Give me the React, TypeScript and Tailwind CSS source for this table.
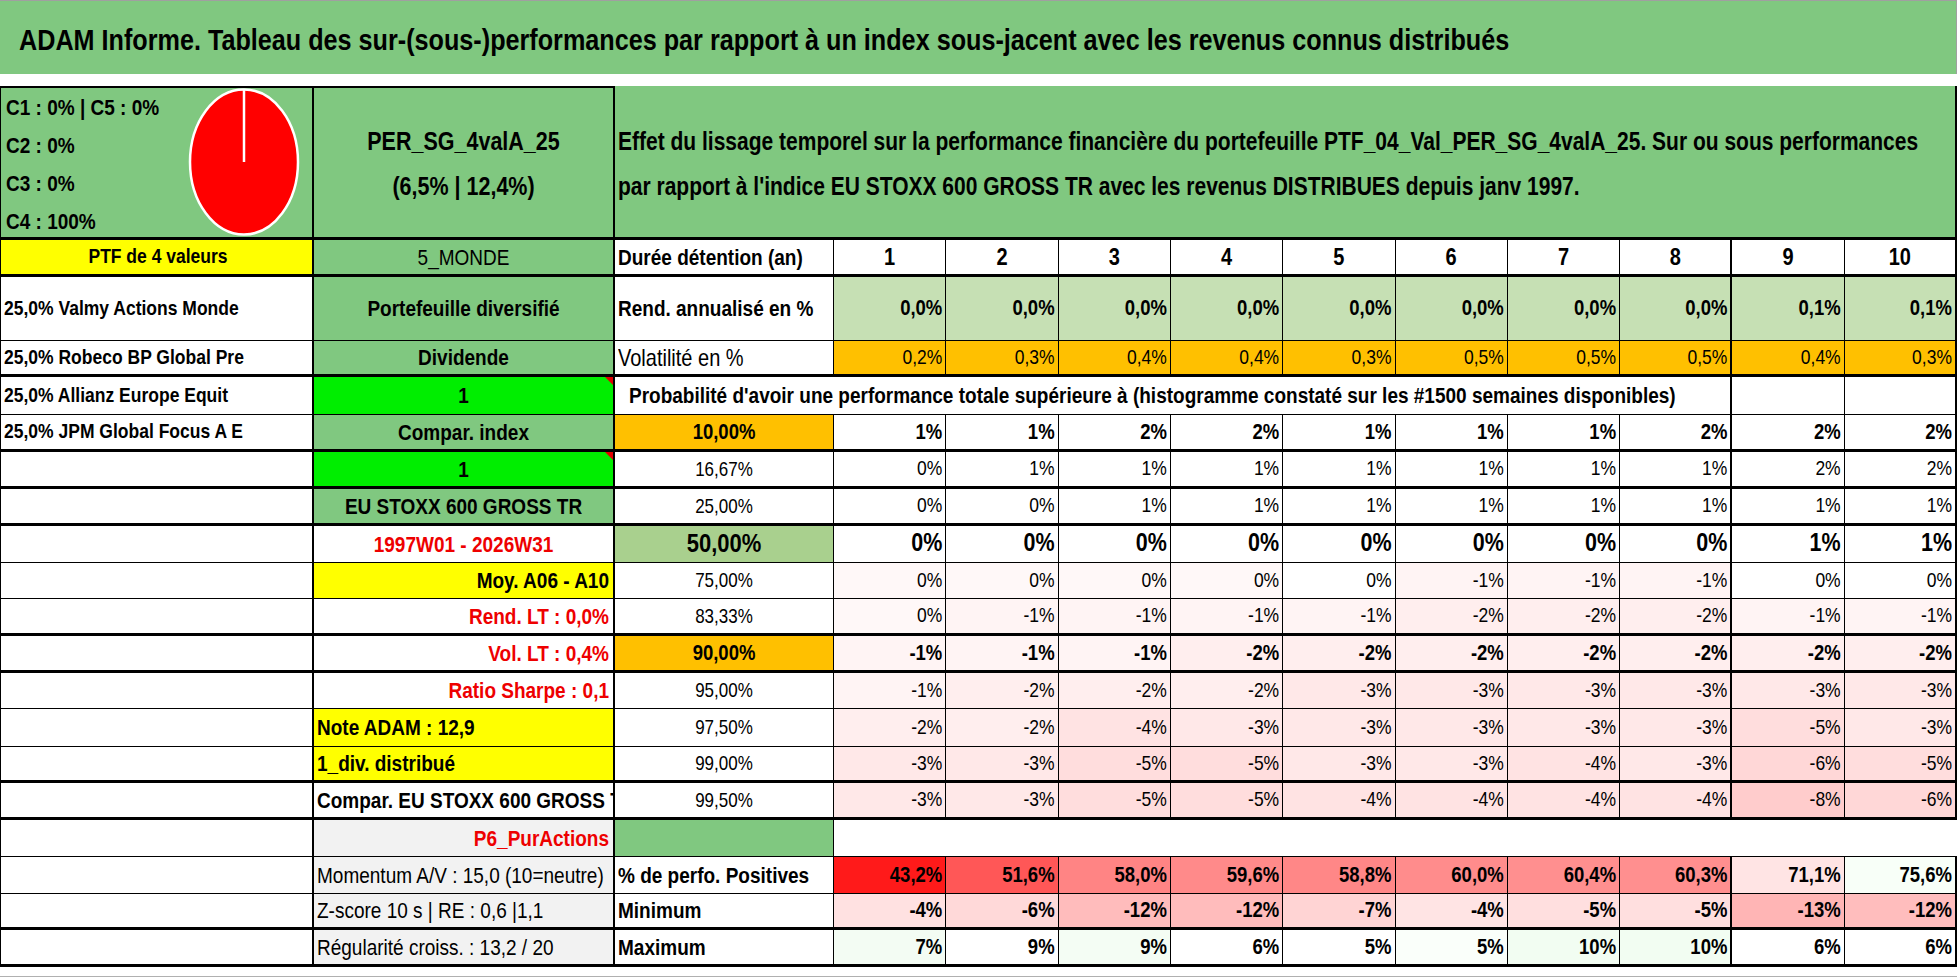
import React from "react";
import clsx from "clsx";

const COLS = "grid grid-cols-[314px_301px_219px_repeat(10,minmax(0,1fr))]";
const GREEN = "bg-[#80c880]";
const LIME = "bg-[#00ee00]";
const YELLOW = "bg-[#ffff00]";
const ORANGE = "bg-[#ffc000]";
const GREY = "bg-[#f2f2f2]";
const RED_TXT = "text-[#ee0000]";
// the sheet uses a tall, narrow face: stretch the glyphs a bit vertically
const TALL = "scale-y-[1.2]";

// light red shades used by the conditional formatting of the percentile grid
const PINK: Record<string, string> = {
  "0%": "bg-white",
  "-1%": "bg-[#fff4f4]",
  "-2%": "bg-[#ffeeee]",
  "-3%": "bg-[#ffe8e8]",
  "-4%": "bg-[#ffe3e3]",
  "-5%": "bg-[#ffdddd]",
  "-6%": "bg-[#ffd7d7]",
  "-8%": "bg-[#ffcccc]",
};

interface CellProps {
  className?: string;
  children?: React.ReactNode;
  mark?: boolean;
}

function Cell({ className, children, mark }: CellProps) {
  return (
    <div className={clsx("relative flex items-center overflow-hidden whitespace-nowrap border-r border-black", className)}>
      {children !== undefined && <span className={TALL}>{children}</span>}
      {mark && (
        <span className="absolute right-0 top-0 h-0 w-0 border-l-[8px] border-t-[8px] border-l-transparent border-t-[#e00000]" />
      )}
    </div>
  );
}

interface NumProps {
  vals: string[];
  bold?: boolean;
  big?: boolean;
  bgs?: string[];
  faint?: number[];
}

function NumCells({ vals, bold, big, bgs, faint }: NumProps) {
  return (
    <>
      {vals.map((v, i) => (
        <Cell
          key={i}
          className={clsx(
            "justify-end pr-[3px]",
            (i === 7 || i === 9) && "border-r-2",
            bgs ? bgs[i] : faint?.includes(i) ? "bg-[#fff8f8]" : PINK[v] ?? "bg-white",
            bold || big ? "font-bold" : "font-normal",
            big ? "text-[21.5px]" : bold ? "text-[18.5px]" : "text-[17.5px]"
          )}
        >
          {v}
        </Cell>
      ))}
    </>
  );
}

const colA = "border-l border-r-2 pl-[3px] text-[17.5px] font-bold";
const colB = "border-r-2 text-[19px] font-bold";
const label = "pl-[3px] text-[19px] font-bold";
const pct = "justify-center text-[17px]";

export default function App() {
  const positives = ["43,2%", "51,6%", "58,0%", "59,6%", "58,8%", "60,0%", "60,4%", "60,3%", "71,1%", "75,6%"];
  const positivesBg = [
    "bg-[#ff1a1a]", "bg-[#ff5757]", "bg-[#ff8484]", "bg-[#ff8a8a]", "bg-[#ff8787]",
    "bg-[#ff8c8c]", "bg-[#ff8f8f]", "bg-[#ff8f8f]", "bg-[#ffe4e4]", "bg-[#f8fff8]",
  ];
  const minimum = ["-4%", "-6%", "-12%", "-12%", "-7%", "-4%", "-5%", "-5%", "-13%", "-12%"];
  const minimumBg = [
    "bg-[#ffe1e1]", "bg-[#ffd9d9]", "bg-[#ffbcbc]", "bg-[#ffbcbc]", "bg-[#ffd4d4]",
    "bg-[#ffe4e4]", "bg-[#ffdfdf]", "bg-[#ffdfdf]", "bg-[#ffb5b5]", "bg-[#ffbdbd]",
  ];
  const maximum = ["7%", "9%", "9%", "6%", "5%", "5%", "10%", "10%", "6%", "6%"];
  const maximumBg = [
    "bg-[#f3fcf3]", "bg-white", "bg-[#f4fdf4]", "bg-white", "bg-white",
    "bg-[#fafffa]", "bg-[#f2fdf2]", "bg-[#f2fdf2]", "bg-white", "bg-white",
  ];

  return (
    <div className="h-[979px] w-[1958px] overflow-hidden bg-white font-['Liberation_Sans',Arial,sans-serif] leading-none text-black">
      {/* title */}
      <div className={clsx("flex h-[74px] w-[1957px] items-center border-t border-r border-[#a0a0a0] pl-[19px] pt-[4px] text-[25.2px] font-bold", GREEN)}>
        <span className={TALL}>
          ADAM Informe. Tableau des sur-(sous-)performances par rapport à un index sous-jacent avec les revenus connus distribués
        </span>
      </div>
      <div className="h-[12px] w-[1957px] bg-white" />

      <div className="w-[1957px]">
        {/* top block: allocation pie, portfolio name and description */}
        <div className={clsx(COLS, "h-[154px] grid-rows-[154px]")}>
          <div className={clsx("flex h-[154px] overflow-hidden border-l border-t-2 border-r-2 border-b-[3px] border-black", GREEN)}>
            <div className="flex flex-col pl-[5px] pt-[1px] text-[19px] font-bold leading-[38px]">
              <span className={TALL}>C1 : 0% | C5 : 0%</span>
              <span className={TALL}>C2 : 0%</span>
              <span className={TALL}>C3 : 0%</span>
              <span className={TALL}>C4 : 100%</span>
            </div>
            <svg className="ml-auto mr-[12px] shrink-0" width="112" height="149" viewBox="0 0 112 149">
              <ellipse cx="56" cy="74" rx="54" ry="72.5" fill="#ff0000" stroke="#ffffff" strokeWidth="2.5" />
              <line x1="56" y1="2" x2="56" y2="74" stroke="#ffffff" strokeWidth="2.5" />
            </svg>
          </div>
          <div className={clsx("flex h-[154px] flex-col items-center justify-center overflow-hidden border-t-2 border-r-2 border-b-[3px] border-black pt-[5px] text-[21.5px] font-bold leading-[45px]", GREEN)}>
            <span className={TALL}>PER_SG_4valA_25</span>
            <span className={TALL}>(6,5% | 12,4%)</span>
          </div>
          <div className={clsx("col-span-11 flex h-[154px] flex-col items-start justify-center overflow-hidden border-r-2 border-b-[3px] border-black pl-[3px] pt-[3px] text-[21px] font-bold leading-[45px]", GREEN)}>
            <span className={TALL}>
              Effet du lissage temporel sur la performance financière du portefeuille PTF_04_Val_PER_SG_4valA_25. Sur ou sous performances
            </span>
            <span className={TALL}>par rapport à l'indice EU STOXX 600 GROSS TR avec les revenus DISTRIBUES depuis janv 1997.</span>
          </div>
        </div>

        {/* PTF / header */}
        <div className={clsx(COLS, "h-[37px] border-b-[3px] border-black")}>
          <Cell className={clsx(colA, YELLOW, "justify-center text-[16.5px]")}>PTF de 4 valeurs</Cell>
          <Cell className={clsx(colB, GREEN, "justify-center text-[17px] font-normal")}>5_MONDE</Cell>
          <Cell className={label}>Durée détention (an)</Cell>
          {["1", "2", "3", "4", "5", "6", "7", "8", "9", "10"].map((n, i) => (
            <Cell key={n} className={clsx("justify-center text-[20px] font-bold", (i === 7 || i === 9) && "border-r-2")}>
              {n}
            </Cell>
          ))}
        </div>

        {/* rendement */}
        <div className={clsx(COLS, "h-[64px] border-b border-black")}>
          <Cell className={colA}>25,0% Valmy Actions Monde</Cell>
          <Cell className={clsx(colB, GREEN, "justify-center")}>Portefeuille diversifié</Cell>
          <Cell className={label}>Rend. annualisé en %</Cell>
          <NumCells
            vals={["0,0%", "0,0%", "0,0%", "0,0%", "0,0%", "0,0%", "0,0%", "0,0%", "0,1%", "0,1%"]}
            bold
            bgs={Array(10).fill("bg-[#c6e0b4]")}
          />
        </div>

        {/* volatilite */}
        <div className={clsx(COLS, "h-[36px] border-b-[3px] border-black")}>
          <Cell className={colA}>25,0% Robeco BP Global Pre</Cell>
          <Cell className={clsx(colB, GREEN, "justify-center")}>Dividende</Cell>
          <Cell className="pl-[3px] text-[20px] font-normal">Volatilité en %</Cell>
          <NumCells
            vals={["0,2%", "0,3%", "0,4%", "0,4%", "0,3%", "0,5%", "0,5%", "0,5%", "0,4%", "0,3%"]}
            bgs={Array(10).fill(ORANGE)}
          />
        </div>

        {/* probabilite */}
        <div className={clsx(COLS, "h-[38px] border-b border-black")}>
          <Cell className={colA}>25,0% Allianz Europe Equit</Cell>
          <Cell className={clsx(colB, LIME, "justify-center")} mark>
            1
          </Cell>
          <Cell className="col-span-9 border-r-2 pl-[14px] text-[19px] font-bold">
            Probabilité d'avoir une performance totale supérieure à (histogramme constaté sur les #1500 semaines disponibles)
          </Cell>
          <Cell />
          <Cell className="border-r-2" />
        </div>

        {/* percentiles */}
        <div className={clsx(COLS, "h-[37px] border-b-[3px] border-black")}>
          <Cell className={colA}>25,0% JPM Global Focus A E</Cell>
          <Cell className={clsx(colB, GREEN, "justify-center")}>Compar. index</Cell>
          <Cell className={clsx(ORANGE, "justify-center text-[18.5px] font-bold")}>10,00%</Cell>
          <NumCells vals={["1%", "1%", "2%", "2%", "1%", "1%", "1%", "2%", "2%", "2%"]} bold />
        </div>

        <div className={clsx(COLS, "h-[37px] border-b-[3px] border-black")}>
          <Cell className={colA} />
          <Cell className={clsx(colB, LIME, "justify-center")} mark>
            1
          </Cell>
          <Cell className={pct}>16,67%</Cell>
          <NumCells vals={["0%", "1%", "1%", "1%", "1%", "1%", "1%", "1%", "2%", "2%"]} />
        </div>

        <div className={clsx(COLS, "h-[37px] border-b-[3px] border-black")}>
          <Cell className={colA} />
          <Cell className={clsx(colB, GREEN, "justify-center text-[15px]")}>EU STOXX 600 GROSS TR</Cell>
          <Cell className={pct}>25,00%</Cell>
          <NumCells vals={["0%", "0%", "1%", "1%", "1%", "1%", "1%", "1%", "1%", "1%"]} />
        </div>

        <div className={clsx(COLS, "h-[37px] border-b border-black")}>
          <Cell className={colA} />
          <Cell className={clsx(colB, RED_TXT, "justify-center")}>1997W01 - 2026W31</Cell>
          <Cell className="justify-center bg-[#a9d08e] text-[22px] font-bold">50,00%</Cell>
          <NumCells vals={["0%", "0%", "0%", "0%", "0%", "0%", "0%", "0%", "1%", "1%"]} big />
        </div>

        <div className={clsx(COLS, "h-[36px] border-b border-black")}>
          <Cell className={colA} />
          <Cell className={clsx(colB, YELLOW, "justify-end pr-[4px]")}>Moy. A06 - A10</Cell>
          <Cell className={pct}>75,00%</Cell>
          <NumCells vals={["0%", "0%", "0%", "0%", "0%", "-1%", "-1%", "-1%", "0%", "0%"]} faint={[0, 1, 2, 3]} />
        </div>

        <div className={clsx(COLS, "h-[37px] border-b-[3px] border-black")}>
          <Cell className={colA} />
          <Cell className={clsx(colB, RED_TXT, "justify-end pr-[4px]")}>Rend. LT : 0,0%</Cell>
          <Cell className={pct}>83,33%</Cell>
          <NumCells vals={["0%", "-1%", "-1%", "-1%", "-1%", "-2%", "-2%", "-2%", "-1%", "-1%"]} faint={[0]} />
        </div>

        <div className={clsx(COLS, "h-[37px] border-b-[3px] border-black")}>
          <Cell className={colA} />
          <Cell className={clsx(colB, RED_TXT, "justify-end pr-[4px]")}>Vol. LT : 0,4%</Cell>
          <Cell className={clsx(ORANGE, "justify-center text-[18.5px] font-bold")}>90,00%</Cell>
          <NumCells vals={["-1%", "-1%", "-1%", "-2%", "-2%", "-2%", "-2%", "-2%", "-2%", "-2%"]} bold />
        </div>

        <div className={clsx(COLS, "h-[36px] border-b border-black")}>
          <Cell className={colA} />
          <Cell className={clsx(colB, RED_TXT, "justify-end pr-[4px]")}>Ratio Sharpe : 0,1</Cell>
          <Cell className={pct}>95,00%</Cell>
          <NumCells vals={["-1%", "-2%", "-2%", "-2%", "-3%", "-3%", "-3%", "-3%", "-3%", "-3%"]} />
        </div>

        <div className={clsx(COLS, "h-[38px] border-b border-black")}>
          <Cell className={colA} />
          <Cell className={clsx(colB, YELLOW, "pl-[3px]")}>Note ADAM : 12,9</Cell>
          <Cell className={pct}>97,50%</Cell>
          <NumCells vals={["-2%", "-2%", "-4%", "-3%", "-3%", "-3%", "-3%", "-3%", "-5%", "-3%"]} />
        </div>

        <div className={clsx(COLS, "h-[36px] border-b-[3px] border-black")}>
          <Cell className={colA} />
          <Cell className={clsx(colB, YELLOW, "pl-[3px]")}>1_div. distribué</Cell>
          <Cell className={pct}>99,00%</Cell>
          <NumCells vals={["-3%", "-3%", "-5%", "-5%", "-3%", "-3%", "-4%", "-3%", "-6%", "-5%"]} />
        </div>

        <div className={clsx(COLS, "h-[37px] border-b-[3px] border-black")}>
          <Cell className={colA} />
          <Cell className={clsx(colB, "pl-[3px]")}>Compar. EU STOXX 600 GROSS TR</Cell>
          <Cell className={pct}>99,50%</Cell>
          <NumCells vals={["-3%", "-3%", "-5%", "-5%", "-4%", "-4%", "-4%", "-4%", "-8%", "-6%"]} />
        </div>

        {/* P6 */}
        <div className={clsx(COLS, "h-[37px] border-b border-black")}>
          <Cell className={colA} />
          <Cell className={clsx(colB, GREY, RED_TXT, "justify-end pr-[4px]")}>P6_PurActions</Cell>
          <Cell className={GREEN} />
          <div className="col-span-10 bg-white" />
        </div>

        {/* stats */}
        <div className={clsx(COLS, "h-[37px] border-b border-black")}>
          <Cell className={colA} />
          <Cell className={clsx(colB, GREY, "pl-[3px] text-[18.5px] font-normal")}>Momentum A/V : 15,0 (10=neutre)</Cell>
          <Cell className={label}>% de perfo. Positives</Cell>
          <NumCells vals={positives} bold bgs={positivesBg} />
        </div>

        <div className={clsx(COLS, "h-[36px] border-b-[3px] border-black")}>
          <Cell className={colA} />
          <Cell className={clsx(colB, GREY, "pl-[3px] text-[18.5px] font-normal")}>Z-score 10 s | RE : 0,6 |1,1</Cell>
          <Cell className={label}>Minimum</Cell>
          <NumCells vals={minimum} bold bgs={minimumBg} />
        </div>

        <div className={clsx(COLS, "h-[37px] border-b-[3px] border-black")}>
          <Cell className={colA} />
          <Cell className={clsx(colB, GREY, "pl-[3px] text-[18.5px] font-normal")}>Régularité croiss. : 13,2 / 20</Cell>
          <Cell className={label}>Maximum</Cell>
          <NumCells vals={maximum} bold bgs={maximumBg} />
        </div>

        <div className="h-[10px] border-b border-[#b0b0b0]" />
      </div>
    </div>
  );
}
